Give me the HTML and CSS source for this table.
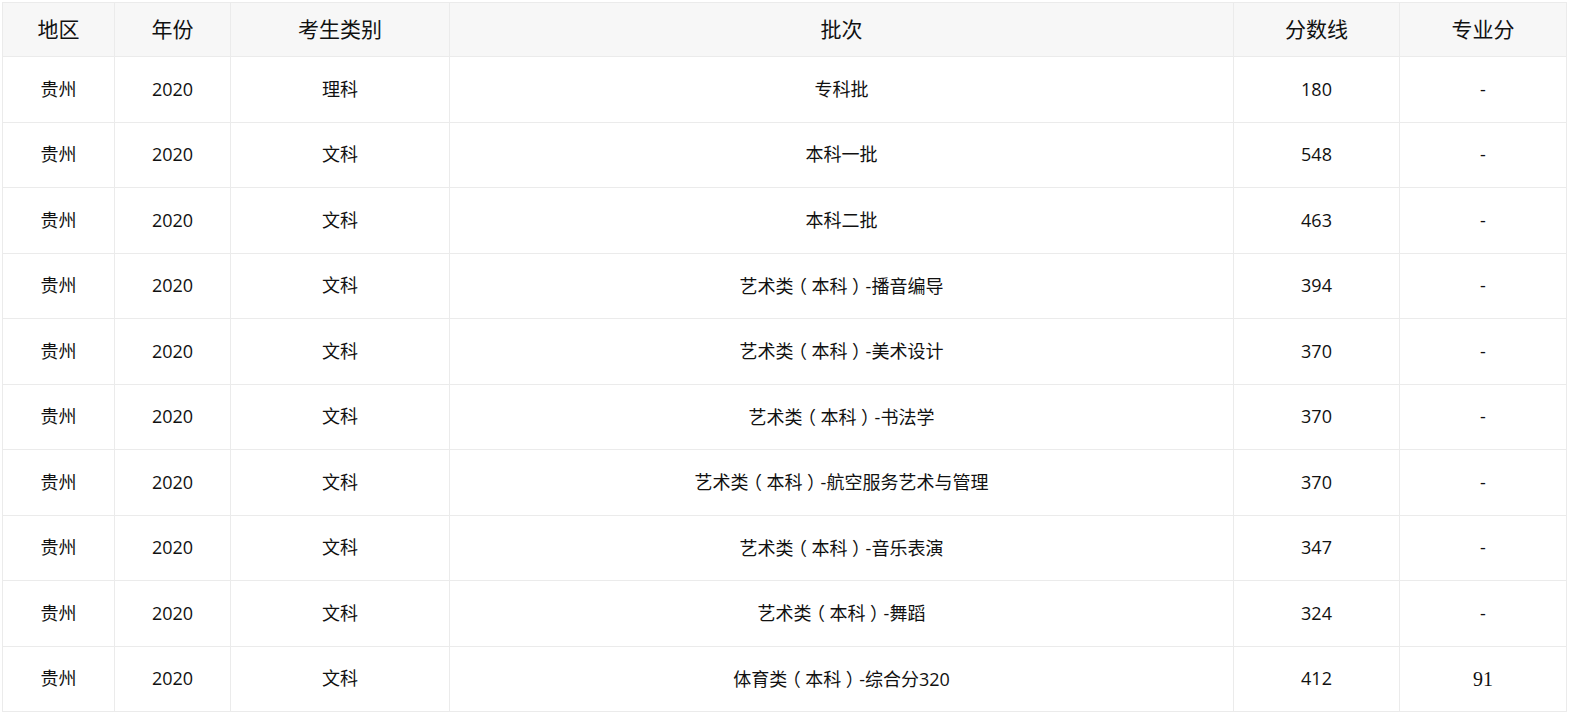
FILE: index.html
```html
<!DOCTYPE html>
<html lang="zh-CN">
<head>
<meta charset="utf-8">
<title>分数线</title>
<link rel="stylesheet" href="styles.css">
</head>
<body>
<table class="score-table">
  <colgroup>
    <col class="c-region">
    <col class="c-year">
    <col class="c-type">
    <col class="c-batch">
    <col class="c-score">
    <col class="c-major">
  </colgroup>
  <thead>
    <tr class="head-row">
      <th>地区</th><th>年份</th><th>考生类别</th><th>批次</th><th>分数线</th><th>专业分</th>
    </tr>
  </thead>
  <tbody>
    <tr><td>贵州</td><td>2020</td><td>理科</td><td>专科批</td><td>180</td><td>-</td></tr>
    <tr><td>贵州</td><td>2020</td><td>文科</td><td>本科一批</td><td>548</td><td>-</td></tr>
    <tr><td>贵州</td><td>2020</td><td>文科</td><td>本科二批</td><td>463</td><td>-</td></tr>
    <tr><td>贵州</td><td>2020</td><td>文科</td><td>艺术类<span class="par">（</span>本科<span class="par">）</span>-播音编导</td><td>394</td><td>-</td></tr>
    <tr><td>贵州</td><td>2020</td><td>文科</td><td>艺术类<span class="par">（</span>本科<span class="par">）</span>-美术设计</td><td>370</td><td>-</td></tr>
    <tr><td>贵州</td><td>2020</td><td>文科</td><td>艺术类<span class="par">（</span>本科<span class="par">）</span>-书法学</td><td>370</td><td>-</td></tr>
    <tr><td>贵州</td><td>2020</td><td>文科</td><td>艺术类<span class="par">（</span>本科<span class="par">）</span>-航空服务艺术与管理</td><td>370</td><td>-</td></tr>
    <tr><td>贵州</td><td>2020</td><td>文科</td><td>艺术类<span class="par">（</span>本科<span class="par">）</span>-音乐表演</td><td>347</td><td>-</td></tr>
    <tr><td>贵州</td><td>2020</td><td>文科</td><td>艺术类<span class="par">（</span>本科<span class="par">）</span>-舞蹈</td><td>324</td><td>-</td></tr>
    <tr><td>贵州</td><td>2020</td><td>文科</td><td>体育类<span class="par">（</span>本科<span class="par">）</span>-综合分320</td><td>412</td><td class="serif">91</td></tr>
  </tbody>
</table>
</body>
</html>
```
FILE: styles.css
```css
html, body {
  margin: 0;
  padding: 0;
  background: #ffffff;
}
body {
  padding: 2px 0 0 2px;
  font-family: "Open Sans", "Noto Sans CJK SC", "Microsoft YaHei", sans-serif;
  color: #111;
}
.score-table {
  border-collapse: collapse;
  table-layout: fixed;
  width: 1564px;
}
.c-region { width: 112px; }
.c-year { width: 116px; }
.c-type { width: 219px; }
.c-batch { width: 784px; }
.c-score { width: 166px; }
.c-major { width: 167px; }
.score-table th,
.score-table td {
  border: 1px solid #ebebeb;
  text-align: center;
  padding: 0;
  font-weight: normal;
  line-height: 1.2;
}
.score-table th {
  background: #f7f7f7;
  font-size: 21px;
  height: 53px;
  color: #111;
}
.score-table td {
  font-size: 18px;
  height: 64px;
}
.score-table tbody tr:nth-child(odd) td {
  height: 65px;
}
.score-table td.serif {
  font-family: "Liberation Serif", serif;
  font-size: 20px;
}
.par {
  font-family: "Noto Sans CJK SC", sans-serif;
  font-feature-settings: "halt" 1;
  padding: 0 0.25em;
}
```
